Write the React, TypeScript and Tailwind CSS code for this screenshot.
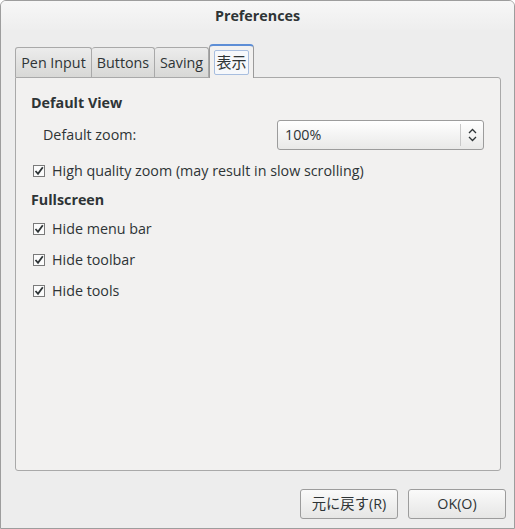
import React from "react";

const font = { fontFamily: '"Open Sans", "Noto Sans CJK JP", sans-serif' };

function Check({ label }: { label: string }) {
  return (
    <div className="flex items-center h-[20px]">
      <div className="w-[12px] h-[12px] border border-[#7a7a7a] bg-[#fbfbfb] flex items-center justify-center ml-[2px]">
        <svg width="10" height="10" viewBox="0 0 10 10">
          <path d="M1.5 5 L4 7.8 L8.8 1.2" fill="none" stroke="#2e3436" strokeWidth="1.8" />
        </svg>
      </div>
      <span className="ml-[7px] text-[14.3px] text-[#2e3436]">{label}</span>
    </div>
  );
}

export default function App() {
  return (
    <div
      style={font}
      className="w-[515px] h-[529px] border border-[#9d9d9d] rounded-t-[6px] bg-[#ededed] flex flex-col overflow-hidden"
    >
      <div className="h-[29px] flex items-center justify-center bg-gradient-to-b from-[#f7f7f7] to-[#eeeeee]">
        <span className="text-[14.3px] font-bold text-[#2e3436]">Preferences</span>
      </div>
      <div className="pl-[14px] pr-[13px] pt-[14px] flex flex-col">
        <div className="flex items-end h-[33px] relative z-10">
          <div className="h-[30px] w-[77px] border border-b-0 border-[#a9a9a9] rounded-t-[3px] bg-gradient-to-b from-[#ececec] to-[#d8d8d6] flex items-center justify-center text-[14.3px] text-[#2e3436]">
            Pen Input
          </div>
          <div className="h-[30px] w-[63px] border border-b-0 border-l-0 border-[#a9a9a9] rounded-t-[3px] bg-gradient-to-b from-[#ececec] to-[#d8d8d6] flex items-center justify-center text-[14.3px] text-[#2e3436]">
            Buttons
          </div>
          <div className="h-[30px] w-[54px] border border-b-0 border-l-0 border-[#a9a9a9] rounded-t-[3px] bg-gradient-to-b from-[#ececec] to-[#d8d8d6] flex items-center justify-center text-[14.3px] text-[#2e3436]">
            Saving
          </div>
          <div className="h-[34px] -mb-px w-[45px] border border-b-0 border-[#9a9a9a] border-t-[2px] border-t-[#5d8ed6] rounded-t-[4px] bg-[#f2f1f0] flex items-center justify-center">
            <div className="w-[35px] h-[25px] mt-[1px] border border-[#a8bedf] rounded-[2px] bg-[#f6f8fb] flex items-center justify-center text-[15px] text-[#2e3436]">
              表示
            </div>
          </div>
        </div>
        <div className="h-[394px] border border-[#a9a9a9] rounded-b-[3px] rounded-tr-[3px] bg-[#f2f1f0] flex flex-col pl-[15px] pr-[16px] pt-[15px]">
          <div className="text-[14.3px] font-bold text-[#2e3436] leading-[20px]">Default View</div>
          <div className="flex items-center mt-[7px] h-[30px]">
            <span className="ml-[12px] text-[14.3px] text-[#2e3436]">Default zoom:</span>
            <div className="ml-auto w-[207px] h-[30px] border border-[#9c9c9c] rounded-[3px] bg-gradient-to-b from-[#ffffff] to-[#e9e9e8] flex items-center">
              <span className="ml-[7px] text-[14.3px] text-[#2e3436]">100%</span>
              <div className="ml-auto h-[22px] w-px bg-[#c8c8c8]" />
              <div className="w-[22px] flex items-center justify-center">
                <svg width="9" height="14" viewBox="0 0 9 14">
                  <path d="M1 5 L4.5 1.5 L8 5 M1 9 L4.5 12.5 L8 9" fill="none" stroke="#2e3436" strokeWidth="1.3" />
                </svg>
              </div>
            </div>
          </div>
          <div className="mt-[11px]">
            <Check label="High quality zoom (may result in slow scrolling)" />
          </div>
          <div className="text-[14.3px] font-bold text-[#2e3436] leading-[20px] mt-[9px]">Fullscreen</div>
          <div className="mt-[9px] flex flex-col gap-[11px]">
            <Check label="Hide menu bar" />
            <Check label="Hide toolbar" />
            <Check label="Hide tools" />
          </div>
        </div>
      </div>
      <div className="flex justify-end gap-[10px] pr-[8px] mt-[18px]">
        <button className="w-[98px] h-[30px] border border-[#9c9c9c] rounded-[3px] bg-gradient-to-b from-[#fafafa] to-[#e6e6e5] text-[14.3px] text-[#2e3436]">
          元に戻す(R)
        </button>
        <button className="w-[98px] h-[30px] border border-[#9c9c9c] rounded-[3px] bg-gradient-to-b from-[#fafafa] to-[#e6e6e5] text-[14.3px] text-[#2e3436]">
          OK(O)
        </button>
      </div>
    </div>
  );
}
